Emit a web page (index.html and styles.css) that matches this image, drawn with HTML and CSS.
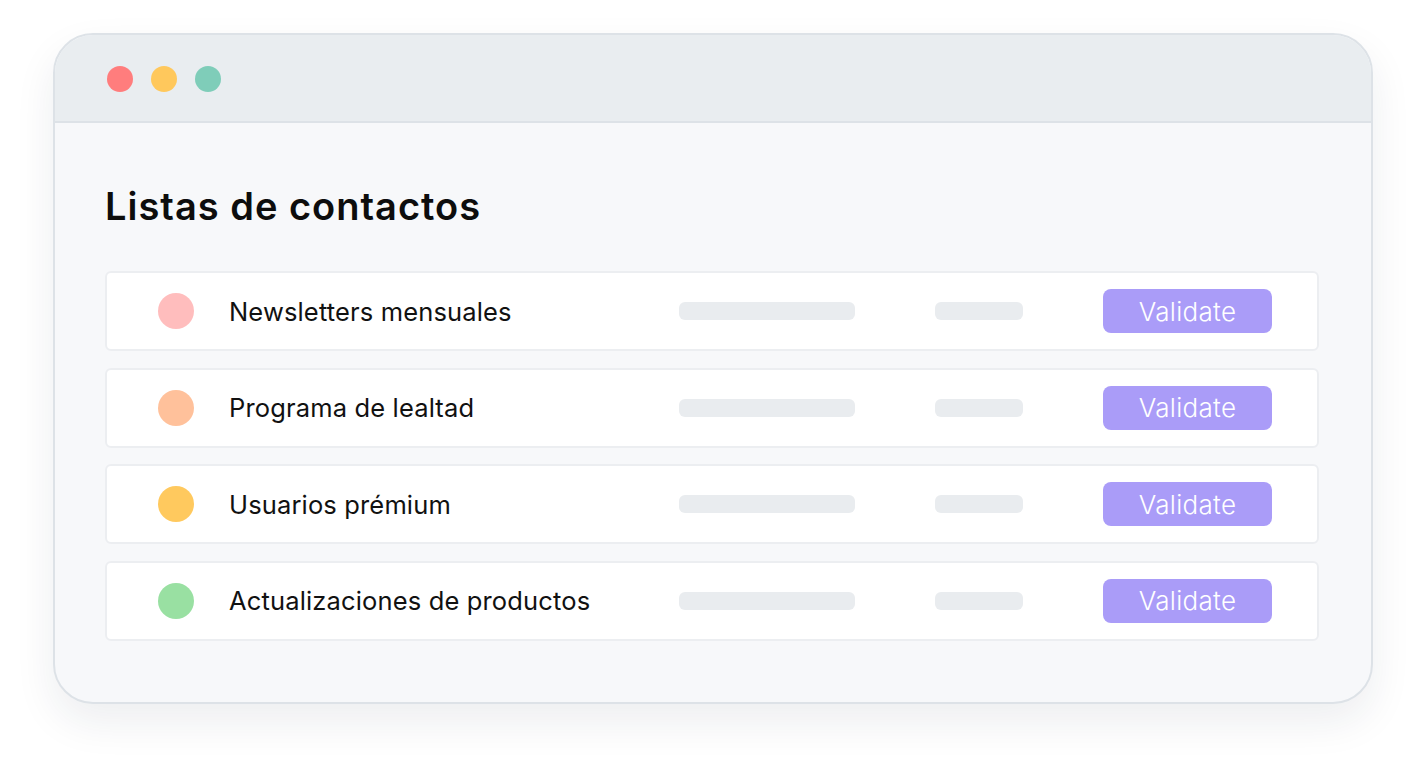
FILE: index.html
```html
<!DOCTYPE html>
<html lang="es">
<head>
<meta charset="utf-8">
<title>Listas de contactos</title>
<link rel="stylesheet" href="styles.css">
</head>
<body>
<div class="window">
  <div class="titlebar">
    <span class="dot dot-red"></span>
    <span class="dot dot-yellow"></span>
    <span class="dot dot-green"></span>
  </div>
  <div class="content">
    <h1 class="title">Listas de contactos</h1>
    <div class="list">
      <div class="row">
        <span class="marker marker-pink"></span>
        <span class="name">Newsletters mensuales</span>
        <span class="bar bar-long"></span>
        <span class="bar bar-short"></span>
        <button class="btn">Validate</button>
      </div>
      <div class="row">
        <span class="marker marker-peach"></span>
        <span class="name">Programa de lealtad</span>
        <span class="bar bar-long"></span>
        <span class="bar bar-short"></span>
        <button class="btn">Validate</button>
      </div>
      <div class="row">
        <span class="marker marker-yellow"></span>
        <span class="name">Usuarios prémium</span>
        <span class="bar bar-long"></span>
        <span class="bar bar-short"></span>
        <button class="btn">Validate</button>
      </div>
      <div class="row">
        <span class="marker marker-green"></span>
        <span class="name">Actualizaciones de productos</span>
        <span class="bar bar-long"></span>
        <span class="bar bar-short"></span>
        <button class="btn">Validate</button>
      </div>
    </div>
  </div>
</div>
</body>
</html>
```
FILE: styles.css
```css
html, body {
  margin: 0;
  padding: 0;
  background: #ffffff;
  font-family: "Inter", "Noto Sans", sans-serif;
}

body {
  padding: 33px 0 0 53px;
  min-height: 759px;
  box-sizing: border-box;
}

.window {
  width: 1320px;
  height: 671px;
  box-sizing: border-box;
  border: 2px solid #dde2e7;
  border-radius: 40px;
  background: #f7f8fa;
  overflow: hidden;
  box-shadow: 0 18px 40px rgba(30, 40, 60, 0.08);
  display: flex;
  flex-direction: column;
}

.titlebar {
  height: 88px;
  flex: none;
  background: #e9edf0;
  border-bottom: 2px solid #dde2e7;
  display: flex;
  align-items: center;
  gap: 18px;
  padding-left: 52px;
  padding-top: 2px;
  box-sizing: border-box;
}

.dot {
  width: 26px;
  height: 26px;
  border-radius: 50%;
}
.dot-red { background: #ff7d7d; }
.dot-yellow { background: #ffc85c; }
.dot-green { background: #7fcdb9; }

.content {
  padding: 60px 52px 0 50px;
}

.title {
  margin: 0 0 42px 0;
  font-size: 38px;
  line-height: 46px;
  font-weight: 600;
  color: #0d0d0d;
  letter-spacing: 1px;
}

.list {
  display: flex;
  flex-direction: column;
  gap: 16.67px;
}

.row {
  height: 80px;
  box-sizing: border-box;
  background: #ffffff;
  border: 2px solid #eceef1;
  border-radius: 6px;
  display: flex;
  align-items: center;
  padding-left: 51px;
}

.marker {
  width: 36px;
  height: 36px;
  border-radius: 50%;
  flex: none;
}
.marker-pink { background: #ffbdbd; }
.marker-peach { background: #ffc19b; }
.marker-yellow { background: #ffc95e; }
.marker-green { background: #99e0a2; }

.name {
  margin-left: 35px;
  width: 450px;
  flex: none;
  font-size: 25.5px;
  color: #111111;
  font-weight: 400;
  letter-spacing: 0.15px;
}

.bar {
  height: 18px;
  border-radius: 6px;
  background: #e9ecef;
  flex: none;
}
.bar-long { width: 176px; }
.bar-short { width: 88px; margin-left: 80px; }

.btn {
  margin-left: 80px;
  width: 169px;
  height: 44px;
  border: none;
  border-radius: 8px;
  background: #aa9cf8;
  color: #ffffff;
  font-family: "Inter", "Noto Sans", sans-serif;
  font-size: 26px;
  font-weight: 300;
  letter-spacing: 0.3px;
  padding: 0;
  cursor: pointer;
}
```
